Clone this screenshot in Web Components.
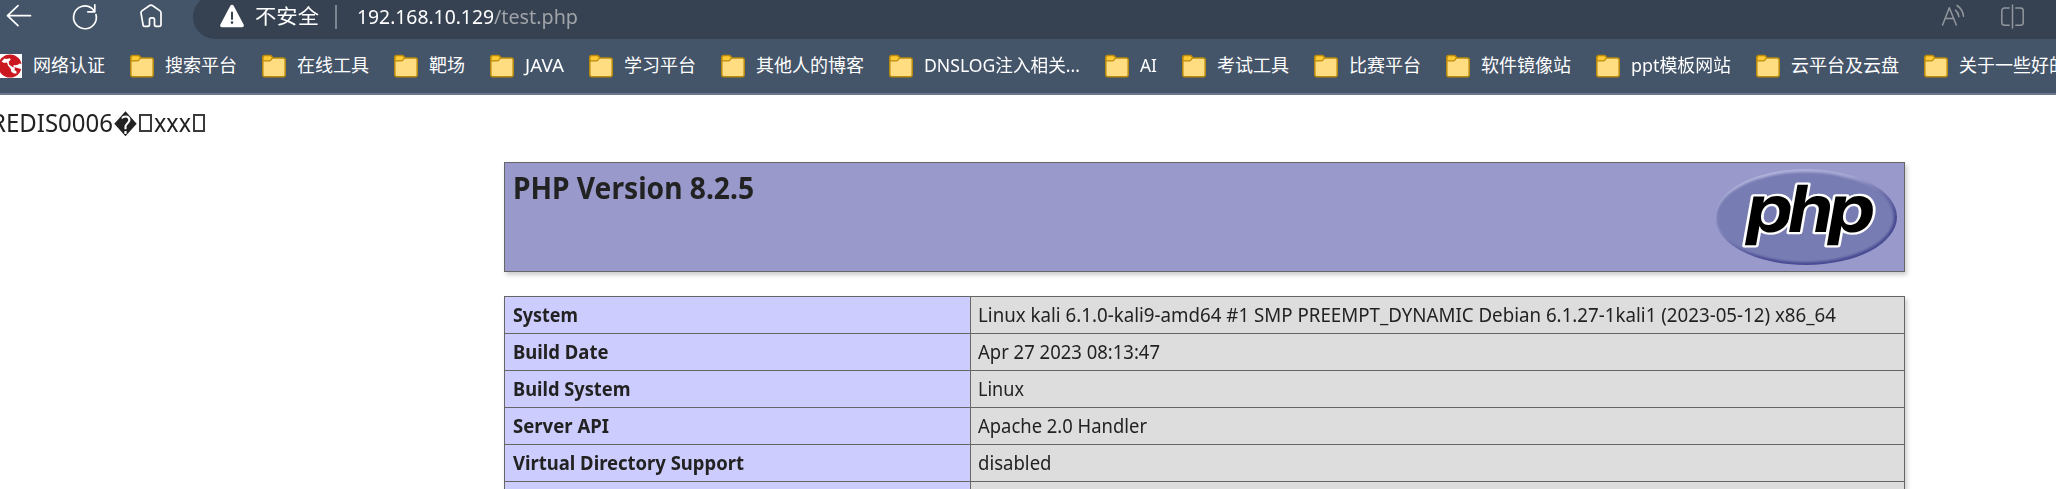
<!DOCTYPE html>
<html lang="zh-CN">
<head>
<meta charset="utf-8">
<title>phpinfo()</title>
<style>
html,body{margin:0;height:489px;overflow:hidden;background:#fff;color:#222;font-family:"Noto Sans","Noto Sans CJK SC",sans-serif}
</style>
</head>
<body>
<browser-toolbar></browser-toolbar>
<bookmarks-bar>
<bookmark-item w="72" site>网络认证</bookmark-item>
<bookmark-item w="72">搜索平台</bookmark-item>
<bookmark-item w="72">在线工具</bookmark-item>
<bookmark-item w="36">靶场</bookmark-item>
<bookmark-item w="39">JAVA</bookmark-item>
<bookmark-item w="72">学习平台</bookmark-item>
<bookmark-item w="108">其他人的博客</bookmark-item>
<bookmark-item w="156">DNSLOG注入相关...</bookmark-item>
<bookmark-item w="17">AI</bookmark-item>
<bookmark-item w="72">考试工具</bookmark-item>
<bookmark-item w="72">比赛平台</bookmark-item>
<bookmark-item w="90">软件镜像站</bookmark-item>
<bookmark-item w="100">ppt模板网站</bookmark-item>
<bookmark-item w="108">云平台及云盘</bookmark-item>
<bookmark-item w="108">关于一些好的</bookmark-item>
</bookmarks-bar>
<redis-dump></redis-dump>
<php-info>
<php-header slot="head">PHP Version 8.2.5</php-header>
<info-row><fit-text slot="k" w="65">System</fit-text><fit-text slot="v" w="858">Linux kali 6.1.0-kali9-amd64 #1 SMP PREEMPT_DYNAMIC Debian 6.1.27-1kali1 (2023-05-12) x86_64</fit-text></info-row>
<info-row><fit-text slot="k" w="95.5">Build Date</fit-text><fit-text slot="v" w="182">Apr 27 2023 08:13:47</fit-text></info-row>
<info-row><fit-text slot="k" w="117.5">Build System</fit-text><fit-text slot="v" w="46">Linux</fit-text></info-row>
<info-row><fit-text slot="k" w="96">Server API</fit-text><fit-text slot="v" w="169">Apache 2.0 Handler</fit-text></info-row>
<info-row><fit-text slot="k" w="231">Virtual Directory Support</fit-text><fit-text slot="v" w="73.5">disabled</fit-text></info-row>
<info-row last></info-row>
</php-info>
<script>
const define = (name, html, init) => customElements.define(name, class extends HTMLElement {
  connectedCallback() {
    if (this.shadowRoot) return;
    this.attachShadow({mode: 'open'}).innerHTML = html;
    if (init) init(this, this.shadowRoot);
  }
});

define('browser-toolbar', `<style>
:host{display:flex;height:39px;background:#445469;overflow:hidden}
nav{display:flex;flex:none;width:193px}
nav svg{display:block;flex:none}
.pill{flex:1;display:flex;align-items:center;height:44px;margin-top:-5px;box-sizing:border-box;padding:0 26px 2px 27px;border-radius:22px 0 0 22px;background:#364252;color:#fff;font-size:20.5px;line-height:42px}
.pill svg{flex:none;display:block}
.safe{margin-left:11px}
.sep{width:2px;height:24px;background:#7d858f;margin:2px 20px 0 16px}
.path{color:#a0a3a7}
.tools{margin-left:auto}
</style>
<nav>
<svg width="193" height="39" viewBox="0 0 193 39" fill="none" stroke="#fff" stroke-width="1.7" stroke-linecap="round" stroke-linejoin="round">
<path d="M30.5 15.7H7.5M18 5.7l-10.5 10 10.5 10"/>
<path d="M96 14.5A11.4 11.4 0 1 1 91.500 8L94.8 11.4M94.8 4.8v7h-7"/>
<path d="M141 12.8c0-.8.3-1.4.9-1.9l7.7-5.4c.9-.6 1.9-.6 2.8 0l7.7 5.4c.6.5.9 1.1.9 1.9v11.7c0 1.1-.7 1.8-1.8 1.8h-3.1c-1.1 0-1.6-.7-1.6-1.8v-4.8c0-1.1-.7-1.8-1.8-1.8h-1.4c-1.1 0-1.8.7-1.8 1.8v4.8c0 1.1-.6 1.8-1.7 1.8h-3c-1.1 0-1.8-.7-1.8-1.8z"/>
</svg>
</nav>
<div class="pill">
<svg width="24" height="24" viewBox="0 0 24 24"><path d="M10.3 1.8c.8-1.4 2.6-1.4 3.4 0l9.9 18.7c.7 1.3-.1 2.7-1.6 2.7H2c-1.5 0-2.3-1.4-1.6-2.7z" fill="#fff"/><path d="M12 8.5v6.5" stroke="#364252" stroke-width="2" stroke-linecap="round"/><circle cx="12" cy="18.6" r="1.3" fill="#364252"/></svg>
<fit-text class="safe" w="64">不安全</fit-text><span class="sep"></span>
<fit-text w="137">192.168.10.129</fit-text><fit-text class="path" w="84">/test.php</fit-text>
<svg class="tools" width="90" height="34" viewBox="1940 -1 90 34" fill="none" stroke="#92979d" stroke-width="1.5" stroke-linecap="round" stroke-linejoin="round">
<path d="M1942.6 25l6.7-17.2 7 17.2M1945.3 18.6h8.5M1955.5 10.2q3 2.5 3.4 6.6M1957 5.5q5.8 3.8 6.5 10.8"/>
<path d="M2012.5 5v23M2009.2 8h-4.7a2.700 2.700 0 0 0-2.700 2.700v11.8a2.700 2.700 0 0 0 2.700 2.700h4.700M2015.800 8h4.700a2.700 2.700 0 0 1 2.700 2.700v11.800a2.700 2.700 0 0 1-2.700 2.700h-4.700"/>
</svg>
</div>`);

define('bookmarks-bar', `<style>
:host{display:flex;gap:24px;align-items:center;height:56px;box-sizing:border-box;padding-bottom:2px;background:#445469;border-bottom:2px solid #6c7889;overflow:hidden;color:#fff;font-size:18px;line-height:30px}
::slotted(:first-child){margin-left:-2px}
</style><slot></slot>`);

define('bookmark-item', `<style>
:host{display:flex;flex:none;gap:11px;align-items:center}
svg{display:block;flex:none;margin-top:2px}
fit-text{margin-right:1px}
</style><svg width="24" height="24" viewBox="0 0 24 24"></svg><fit-text></fit-text>`, (el, root) => {
  root.querySelector('svg').innerHTML = el.hasAttribute('site')
    ? '<path d="M0 0h24v24H0z" fill="#fff"/><circle cx="12" cy="12" r="11.6" fill="#cb1820"/><path d="M3.500 7.500l3-3 2 .5 3-.8 1.300 1.300-2 2 .2 3 3.500 2.500 2.500.5-.5 2.500 2 1.500v2h-2.500l-2.500-1.500-1-3.500-2.500-3-1-3-3 .500z" fill="#fff"/><path d="M15.500 11q4 1 6-1.500l2.500.8v5q-3.500-1-8.500-2.500z" fill="#fff"/>'
    : '<path d="M.8 20.800V3.600Q.8 1.500 2.800 1.500H8q1 0 1.600.8L10.800 4h10.400q2 0 2 2v14.800q0 2-2 2H2.800q-2 0-2-2z" fill="#ffdd80" stroke="#b98a0c" stroke-width="1.500"/><path d="M1 6.800V3.600Q1 1.700 2.800 1.700H8q1 0 1.600.8l1 1.300-2 2.500q-.4.500-1 .500z" fill="#ffc933" stroke="#b98a0c" stroke-width="1.200"/>';
  const label = document.createElement('fit-text');
  label.setAttribute('w', el.getAttribute('w'));
  label.textContent = el.textContent;
  root.querySelector('fit-text').replaceWith(label);
});

define('redis-dump', `<style>
:host{display:flex;height:67px;overflow:hidden;font-size:24.500px;line-height:56px;white-space:nowrap}
.ctl{flex:none;width:12.500px;height:18px;box-sizing:border-box;border:2px solid #3a3a3a;margin-top:19px}
.bad{font-family:"DejaVu Sans",sans-serif;font-size:25px;margin:3px 2px 0 1px}
</style><fit-text w="122" style="margin-left:-9px">REDIS0006</fit-text><fit-text class="bad" w="23">&#xFFFD;</fit-text><i class="ctl"></i><fit-text w="37" style="margin:0 2px">xxx</fit-text><i class="ctl"></i>`);

define('php-info', `<style>
:host{display:block;width:1401px;margin-left:504px}
.t{margin-top:24px;border-top:1px solid #666;box-shadow:1.500px 3px 4.500px #ccc}
</style><slot name="head"></slot><div class="t"><slot></slot></div>`);

define('php-header', `<style>
:host{display:flex;justify-content:space-between;height:110px;box-sizing:border-box;border:1px solid #666;background:#99c;box-shadow:1.500px 3px 4.500px #ccc;padding:5px 7px 0 8px;font-size:29.500px;font-weight:700;line-height:40px}
svg{display:block;margin-top:1px}
</style><fit-text w="241"></fit-text>
<svg width="182" height="96" viewBox="0 0 182 96">
<defs>
<linearGradient id="rim" x1=".2" y1="0" x2=".8" y2="1"><stop offset="0" stop-color="#b4b6dc"/><stop offset=".3" stop-color="#a3a5d2"/><stop offset=".52" stop-color="#6c6faa"/><stop offset=".72" stop-color="#484a91"/><stop offset="1" stop-color="#484a91"/></linearGradient>
<filter id="soft"><feGaussianBlur stdDeviation=".8"/></filter>
</defs>
<ellipse cx="91" cy="48" rx="91" ry="48" fill="url(#rim)"/>
<ellipse cx="90" cy="48.200" rx="88.800" ry="45" fill="#777bb3" filter="url(#soft)"/>
<g font-family="Inter,sans-serif" font-weight="700" font-size="65" fill="#000" stroke="#fff" stroke-width="4.500" stroke-linejoin="round" paint-order="stroke">
<text transform="translate(27.500 62.500) skewX(-10)" textLength="48" lengthAdjust="spacingAndGlyphs">p</text>
<text transform="translate(109.500 62.500) skewX(-10)" textLength="48" lengthAdjust="spacingAndGlyphs">p</text>
<text transform="translate(69.500 62.500) skewX(-10)" textLength="46" lengthAdjust="spacingAndGlyphs">h</text>
</g></svg>`, (el, root) => {
  const t = document.createElement('fit-text');
  t.setAttribute('w', '241');
  t.textContent = el.textContent;
  root.querySelector('fit-text').replaceWith(t);
});

define('info-row', `<style>
:host{display:grid;grid-template-columns:466px 1fr;height:37px;font-size:19px;line-height:36px}
:host([last]){height:7px}
div{box-sizing:border-box;border:1px solid #666;border-top:0;padding-left:7.500px}
:host([last]) div{border-bottom:0}
.k{background:#ccf;font-weight:700;border-right:0}
.v{background:#ddd;padding-left:7px}
</style><div class="k"><slot name="k"></slot></div><div class="v"><slot name="v"></slot></div>`);

/* One line of text, condensed or widened to the width in its "w" attribute.
   Defined last: it measures itself in the font its host component sets. */
define('fit-text', `<style>
:host{display:inline-block;white-space:nowrap}
span{display:inline-block;transform-origin:0 50%}
</style><span><slot></slot></span>`, (el, root) => {
  const span = root.querySelector('span'), w = parseFloat(el.getAttribute('w'));
  el.style.width = w + 'px';
  span.style.transform = `scaleX(${w / span.getBoundingClientRect().width})`;
});
</script>
</body>
</html>
